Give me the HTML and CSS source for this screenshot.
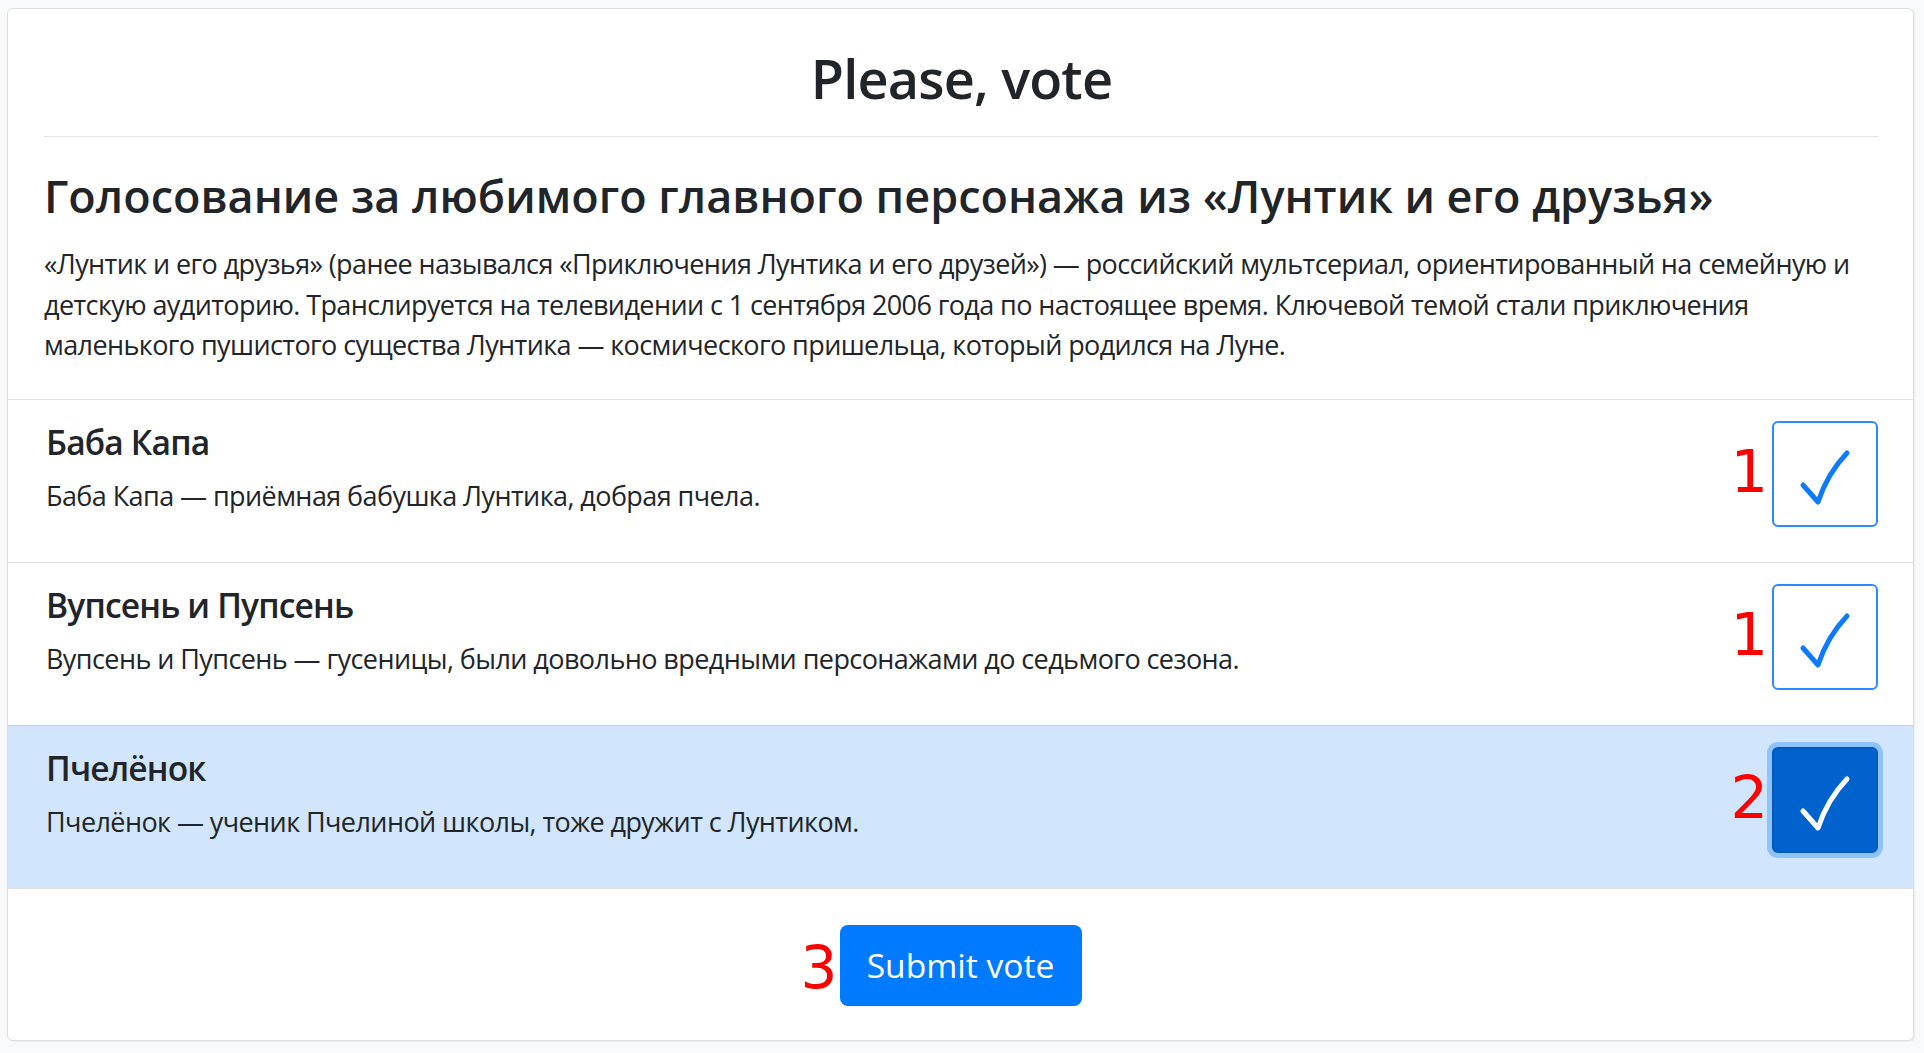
FILE: index.html
```html
<!DOCTYPE html>
<html lang="ru">
<head>
<meta charset="utf-8">
<title>Please, vote</title>
<link rel="stylesheet" href="styles.css">
</head>
<body>
<div class="page">
  <div class="card">
    <div class="card-head">
      <h1 class="title">Please, vote</h1>
      <hr class="rule">
      <h2 class="poll-title">Голосование за любимого главного персонажа из «Лунтик и его друзья»</h2>
      <p class="poll-desc">«Лунтик и его друзья» (ранее назывался «Приключения Лунтика и его друзей») — российский мультсериал, ориентированный на семейную и детскую аудиторию. Транслируется на телевидении с 1 сентября 2006 года по настоящее время. Ключевой темой стали приключения маленького пушистого существа Лунтика — космического пришельца, который родился на Луне.</p>
    </div>
    <ul class="options">
      <li class="option">
        <div class="option-text">
          <h3 class="option-name">Баба Капа</h3>
          <p class="option-desc">Баба Капа — приёмная бабушка Лунтика, добрая пчела.</p>
        </div>
        <div class="option-control">
          <span class="mark">1</span>
          <button class="check" type="button" aria-pressed="false">
            <svg viewBox="0 0 106 106" width="106" height="106"><path d="M31 64 L46 81 Q55 53 75 32"/></svg>
          </button>
        </div>
      </li>
      <li class="option">
        <div class="option-text">
          <h3 class="option-name">Вупсень и Пупсень</h3>
          <p class="option-desc">Вупсень и Пупсень — гусеницы, были довольно вредными персонажами до седьмого сезона.</p>
        </div>
        <div class="option-control">
          <span class="mark">1</span>
          <button class="check" type="button" aria-pressed="false">
            <svg viewBox="0 0 106 106" width="106" height="106"><path d="M31 64 L46 81 Q55 53 75 32"/></svg>
          </button>
        </div>
      </li>
      <li class="option option-selected">
        <div class="option-text">
          <h3 class="option-name">Пчелёнок</h3>
          <p class="option-desc">Пчелёнок — ученик Пчелиной школы, тоже дружит с Лунтиком.</p>
        </div>
        <div class="option-control">
          <span class="mark">2</span>
          <button class="check check-on" type="button" aria-pressed="true">
            <svg viewBox="0 0 106 106" width="106" height="106"><path d="M31 64 L46 81 Q55 53 75 32"/></svg>
          </button>
        </div>
      </li>
    </ul>
    <div class="card-foot">
      <div class="submit-wrap">
        <span class="mark mark-submit">3</span>
        <button class="submit" type="submit">Submit vote</button>
      </div>
    </div>
  </div>
</div>
</body>
</html>
```
FILE: styles.css
```css
html, body {
  margin: 0;
  padding: 0;
  background: #f8f9fa;
}

body {
  font-family: "Segoe UI", "Open Sans", "Noto Sans", sans-serif;
  color: #212529;
}

.page {
  padding: 8px 10px 11px 7px;
}

.card {
  background: #fff;
  border: 1px solid #dcdee0;
  border-radius: 6px;
  box-shadow: 1px 1px 2px rgba(0, 0, 0, 0.06);
  overflow: hidden;
}

.card-head {
  padding: 37px 34px 33px 36px;
}

.title {
  margin: 0;
  font-size: 54px;
  line-height: 64px;
  font-weight: 600;
  letter-spacing: -0.8px;
  text-align: center;
}

.rule {
  margin: 26px 0 0;
  border: 0;
  border-top: 1px solid #e3e4e5;
}

.poll-title {
  margin: 31px 0 0;
  font-size: 45px;
  line-height: 56px;
  font-weight: 600;
}

.poll-desc {
  margin: 20px 0 0;
  font-size: 27px;
  line-height: 40.5px;
  letter-spacing: -0.6px;
}

.options {
  list-style: none;
  margin: 0;
  padding: 0;
}

.option {
  display: flex;
  align-items: flex-start;
  height: 162px;
  padding: 0 35px 0 38px;
  border-top: 1px solid #e1e2e3;
}

.option-selected {
  background: #d1e5fc;
  border-top-color: #bcd2ea;
  border-bottom: 1px solid #bcd2ea;
  margin-bottom: -1px;
}

.option-text {
  flex: 1;
  padding-top: 22px;
}

.option-name {
  margin: 0;
  font-size: 33.6px;
  line-height: 40px;
  font-weight: 600;
  letter-spacing: -0.85px;
}

.option-desc {
  margin: 14px 0 0;
  font-size: 27px;
  line-height: 40.5px;
  letter-spacing: -0.58px;
}

.option-control {
  display: flex;
  align-items: center;
  gap: 4px;
  padding-top: 21px;
}

.mark {
  font-family: "DejaVu Sans", sans-serif;
  color: #ff0000;
  font-size: 59px;
  line-height: 60px;
  margin-bottom: 3px;
}

.check {
  width: 106px;
  height: 106px;
  padding: 0;
  margin: 0;
  border: 2px solid #2b8aff;
  border-radius: 6px;
  background: #fff;
  display: block;
}

.check svg {
  display: block;
  margin: -2px;
}

.check path {
  fill: none;
  stroke: #0d7bff;
  stroke-width: 5;
  stroke-linecap: round;
  stroke-linejoin: round;
}

.check-on {
  background: #0062cc;
  border-color: #0058b8;
  box-shadow: 0 0 0 5px #8ec2fb;
}

.check-on path {
  stroke: #fff;
}

.card-foot {
  display: flex;
  justify-content: center;
  padding: 36px 0 34px;
  border-top: 1px solid #e1e2e3;
}

.submit-wrap {
  position: relative;
}

.mark-submit {
  position: absolute;
  right: calc(100% + 2px);
  top: 13px;
  font-size: 58px;
  margin: 0;
}

.submit {
  display: flex;
  align-items: center;
  justify-content: center;
  width: 242px;
  height: 81px;
  padding: 0;
  border: 0;
  border-radius: 8px;
  background: #007bff;
  color: #fff;
  font-family: inherit;
  font-size: 33.6px;
  font-weight: 400;
}
```
